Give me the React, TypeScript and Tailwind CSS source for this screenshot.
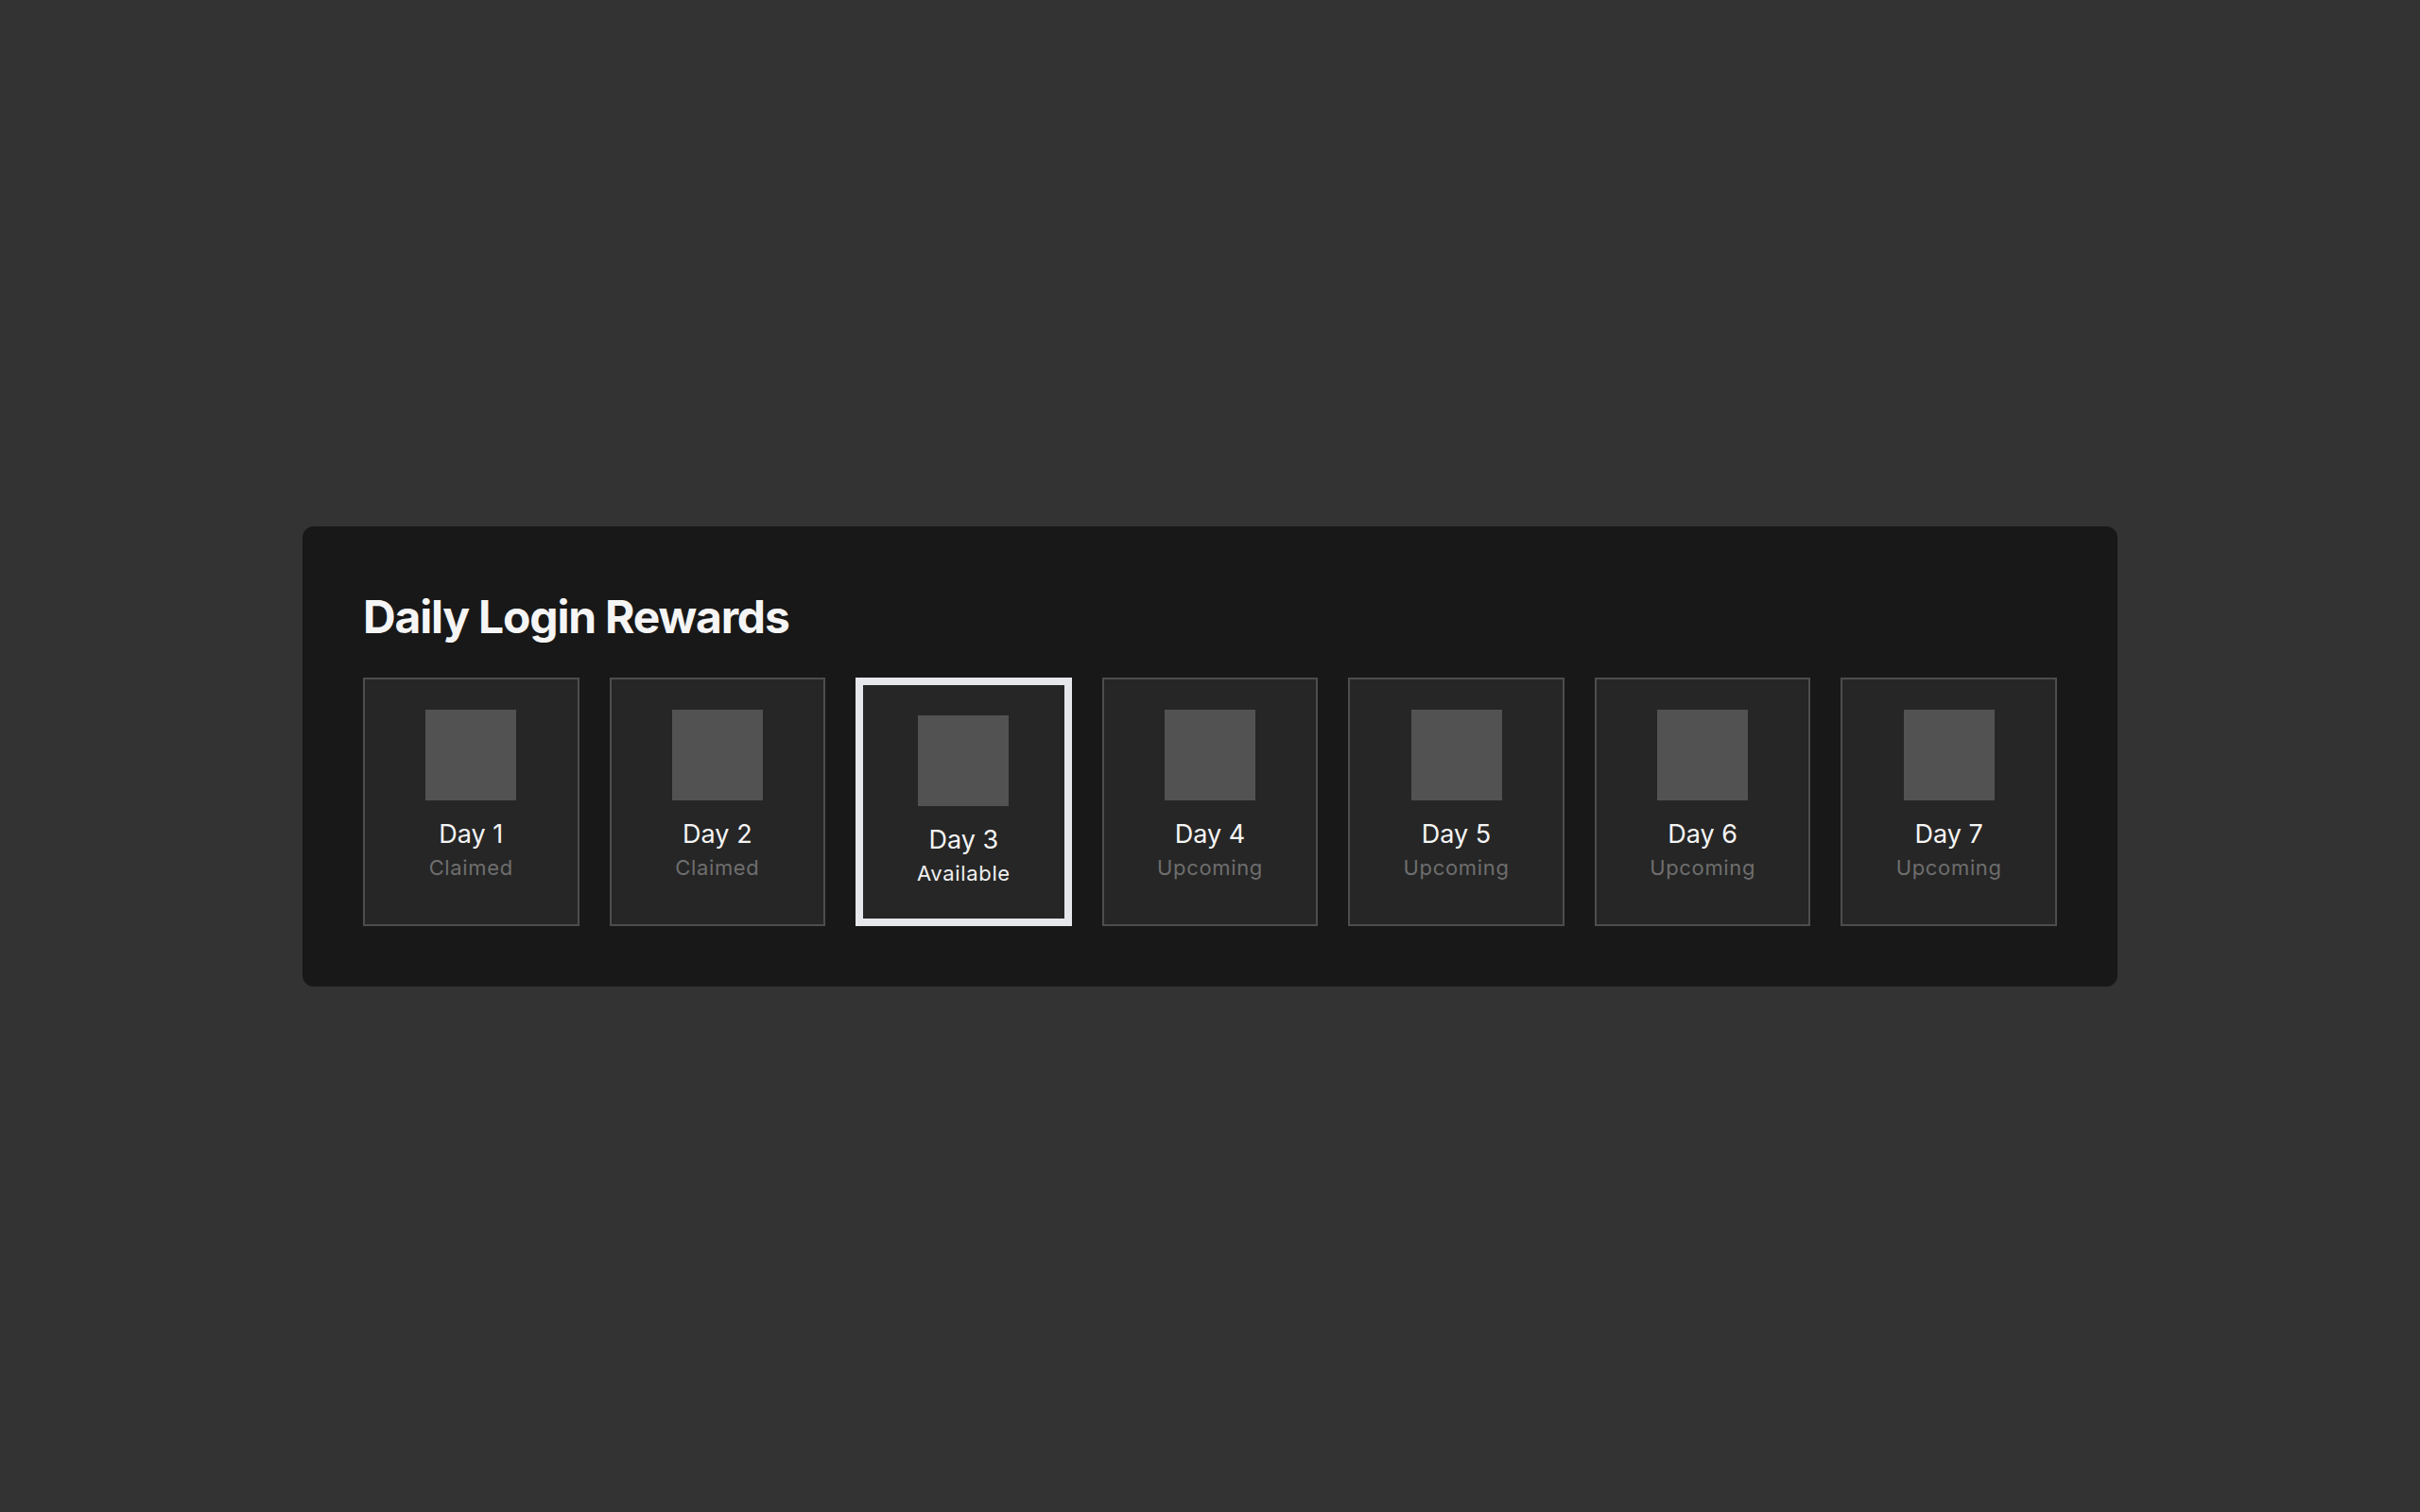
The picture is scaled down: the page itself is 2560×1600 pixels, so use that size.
import React from 'react';

type RewardStatus = 'claimed' | 'available' | 'upcoming';

interface Reward {
  day: number;
  status: RewardStatus;
}

const REWARDS: Reward[] = [
  { day: 1, status: 'claimed' },
  { day: 2, status: 'claimed' },
  { day: 3, status: 'available' },
  { day: 4, status: 'upcoming' },
  { day: 5, status: 'upcoming' },
  { day: 6, status: 'upcoming' },
  { day: 7, status: 'upcoming' },
];

const STATUS_LABEL: Record<RewardStatus, string> = {
  claimed: 'Claimed',
  available: 'Available',
  upcoming: 'Upcoming',
};

function RewardCard({ reward }: { reward: Reward }) {
  const isAvailable = reward.status === 'available';

  return (
    <div
      className={
        isAvailable
          ? 'flex flex-col items-center bg-[#262626] border-8 border-[#e6e7eb] p-8'
          : 'flex flex-col items-center bg-[#262626] border-2 border-[#4d4d4d] p-8'
      }
    >
      {/* reward icon placeholder */}
      <div className="w-24 h-24 bg-[#525252] mb-4" />
      <div className="text-[27px] leading-[39px] text-[#f5f5f5]">Day {reward.day}</div>
      <div
        className={
          isAvailable
            ? 'text-[22px] leading-[32px] tracking-[0.03em] text-[#f0f0f0]'
            : 'text-[22px] leading-[32px] tracking-[0.03em] text-[#6e6e6e]'
        }
      >
        {STATUS_LABEL[reward.status]}
      </div>
    </div>
  );
}

export default function App() {
  return (
    <div className="min-h-screen bg-[#333333] flex items-center justify-center font-['Inter',sans-serif]">
      <section className="w-[1920px] bg-[#181818] rounded-xl p-16">
        <h2 className="text-[48px] leading-[64px] font-bold tracking-tight text-[#f5f5f5] mb-8">
          Daily Login Rewards
        </h2>
        <div className="grid grid-cols-7 gap-8">
          {REWARDS.map(r => (
            <RewardCard key={r.day} reward={r} />
          ))}
        </div>
      </section>
    </div>
  );
}
